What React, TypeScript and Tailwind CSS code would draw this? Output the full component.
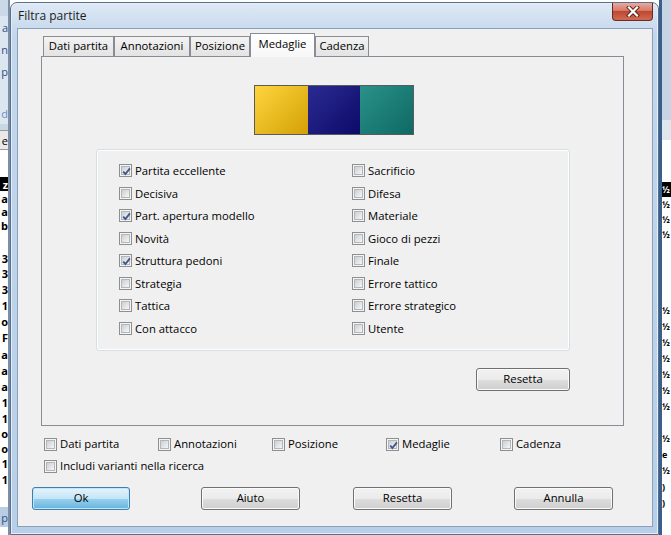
import type { ReactNode } from 'react';

const Check = ({ checked = false }: { checked?: boolean }) => (
  <span className="relative flex h-[13px] w-[13px] shrink-0 items-center justify-center border border-[#8e8f8f] bg-[#f4f4f4]">
    <span className="h-[9px] w-[9px] border border-[#b3b7bb] bg-[linear-gradient(135deg,#cbcfd4,#f6f6f6)]" />
    {checked && (
      <svg className="absolute left-[1px] top-[1px]" width="11" height="11" viewBox="0 0 11 11">
        <path d="M2.2 5.6 L4.4 8 L8.9 2.3" fill="none" stroke="#44598a" strokeWidth="1.9" />
      </svg>
    )}
  </span>
);

const CheckItem = ({ label, checked }: { label: string; checked?: boolean }) => (
  <div className="flex items-center gap-[3px] whitespace-nowrap">
    <Check checked={checked} />
    <span className="leading-none">{label}</span>
  </div>
);

const Btn = ({ children, className = '', focused = false }: { children: ReactNode; className?: string; focused?: boolean }) => (
  <div
    className={`flex h-[23px] shrink-0 items-center justify-center rounded-[3px] border ${
      focused
        ? 'border-[#3c7fb1] bg-[linear-gradient(to_bottom,#e5f4fc_0%,#c4e5f6_50%,#98d1ef_51%,#68b3db_100%)] shadow-[inset_0_0_0_1px_#bfe6fa]'
        : 'border-[#707070] bg-[linear-gradient(to_bottom,#f2f2f2_0%,#ebebeb_50%,#dddddd_51%,#cfcfcf_100%)] shadow-[inset_0_0_0_1px_#fbfbfb]'
    } ${className}`}
  >
    {children}
  </div>
);

// fragments of the window lying behind the dialog
const leftRows: [number, string, string][] = [
  [16, '', 'bg-[#cad8e8]'],
  [22, 'a', 'bg-[#dce6f1] text-[#2f4f80]'],
  [22, 'n', 'bg-[#dce6f1] text-[#2f4f80]'],
  [22, 'p', 'bg-[#dce6f1] text-[#2f4f80]'],
  [20, '', 'bg-[#dce6f1]'],
  [22, 'd', 'bg-[#dce6f1] text-[#6d8fbf]'],
  [6, '', 'bg-[#c9d6e4]'],
  [20, 'e', 'bg-[#e9e9e9] text-black border-y border-[#9a9a9a]'],
  [27, '', 'bg-white'],
  [14, 'z', 'bg-black text-white font-bold'],
  [14, 'a', 'bg-white font-bold'],
  [13, 'a', 'bg-white font-bold'],
  [14, 'b', 'bg-white font-bold'],
  [19, '', 'bg-white'],
  [15, '3', 'bg-white font-bold'],
  [15, '3', 'bg-white font-bold'],
  [16, '3', 'bg-white font-bold'],
  [16, '1', 'bg-white font-bold'],
  [16, 'o', 'bg-white font-bold'],
  [17, 'F', 'bg-white font-bold'],
  [16, 'a', 'bg-white font-bold'],
  [16, 'a', 'bg-white font-bold'],
  [16, 'a', 'bg-white font-bold'],
  [16, '1', 'bg-white font-bold'],
  [16, '1', 'bg-white font-bold'],
  [15, 'o', 'bg-white font-bold'],
  [15, 'o', 'bg-white font-bold'],
  [15, '1', 'bg-white font-bold'],
  [16, '1', 'bg-white font-bold'],
  [20, '', 'bg-white'],
  [20, 'p', 'bg-[#b9cde4] text-[#2f4f80]'],
];

const rightRows: [number, string, string][] = [
  [120, '', 'bg-[#c6d4e4]'],
  [20, '', 'bg-[#dfe6ee]'],
  [42, '', 'bg-white'],
  [15, '½', 'bg-black text-white'],
  [15, '½', 'bg-white'],
  [15, '½', 'bg-white'],
  [15, '½', 'bg-white'],
  [20, '', 'bg-white'],
  [22, '', 'bg-white'],
  [18, '', 'bg-white'],
  [16, '½', 'bg-white'],
  [16, '½', 'bg-white'],
  [16, '½', 'bg-white'],
  [16, '½', 'bg-white'],
  [16, '½', 'bg-white'],
  [16, '½', 'bg-white'],
  [16, '½', 'bg-white'],
  [16, '', 'bg-white'],
  [16, '½', 'bg-white'],
  [16, 'e', 'bg-white'],
  [16, '½', 'bg-white'],
  [16, ')', 'bg-white'],
  [16, ')', 'bg-white'],
  [40, '', 'bg-white'],
];

const leftCol = ['Partita eccellente', 'Decisiva', 'Part. apertura modello', 'Novità', 'Struttura pedoni', 'Strategia', 'Tattica', 'Con attacco'];
const leftChecked = [true, false, true, false, true, false, false, false];
const rightCol = ['Sacrificio', 'Difesa', 'Materiale', 'Gioco di pezzi', 'Finale', 'Errore tattico', 'Errore strategico', 'Utente'];

const tabs = [
  { label: 'Dati partita', w: 'w-[71px]' },
  { label: 'Annotazioni', w: 'w-[76px]' },
  { label: 'Posizione', w: 'w-[60px]' },
  { label: 'Medaglie', w: 'w-[65px]', active: true },
  { label: 'Cadenza', w: 'w-[54px]' },
];

export default function App() {
  return (
    <div className="flex h-[535px] w-[671px] overflow-hidden bg-white font-['Open_Sans',sans-serif] text-[11.3px] text-black">
      {/* window behind, left edge */}
      <div className="flex w-[10px] shrink-0 flex-col overflow-hidden border-r-2 border-[#7d8fa6]">
        {leftRows.map(([h, t, c], i) => (
          <div key={i} style={{ height: h }} className={`flex shrink-0 items-center justify-end whitespace-nowrap text-[11px] leading-none ${c}`}>
            {t}
          </div>
        ))}
      </div>

      {/* dialog */}
      <div className="mt-[2px] flex w-[649px] shrink-0 flex-col rounded-t-[7px] border border-[#56708f] bg-[linear-gradient(to_bottom,#dfe9f4_0%,#c3d7ec_6%,#b7cfe8_100%)] pb-[7px] pl-[6px] pr-[5px] shadow-[inset_0_0_0_1px_#e6eff8]">
        <div className="flex h-[25px] items-start justify-between">
          <span className="pl-[1px] pt-[4px] text-[12px] text-[#1b1b1b]">Filtra partite</span>
          <div className="flex h-[18px] w-[41px] items-center justify-center rounded-b-[4px] border border-t-0 border-[#6b2a23] bg-[linear-gradient(to_bottom,#e8aa9e_0%,#d47a68_45%,#c0472f_50%,#cf6b52_100%)]">
            <svg width="14" height="11" viewBox="0 0 14 11">
              <path d="M3 1.5 L11 9.5 M11 1.5 L3 9.5" stroke="#5a2018" strokeWidth="4" strokeLinecap="square" />
              <path d="M3 1.5 L11 9.5 M11 1.5 L3 9.5" stroke="#ffffff" strokeWidth="2.2" strokeLinecap="square" />
            </svg>
          </div>
        </div>

        <div className="flex flex-1 flex-col border border-[#8ba1bb] bg-[#f0f0f0]">
          {/* tabs */}
          <div className="ml-[24px] mt-[4px] flex items-end pl-[1px]">
            {tabs.map((t) =>
              t.active ? (
                <div key={t.label} className={`relative z-10 -mb-px flex h-[24px] items-start justify-center border border-b-0 border-[#898c95] bg-[linear-gradient(to_bottom,#ffffff,#f7f7f7)] pt-[2px] ${t.w}`}>
                  {t.label}
                </div>
              ) : (
                <div key={t.label} className={`flex h-[20px] items-center justify-center border border-b-0 border-[#898c95] bg-[linear-gradient(to_bottom,#f3f3f3,#e3e3e3)] ${t.w}`}>
                  {t.label}
                </div>
              ),
            )}
          </div>

          {/* panel */}
          <div className="ml-[23px] mr-[28px] flex h-[370px] flex-col border border-[#898c95] bg-[#f0f0f0]">
            <div className="ml-[212px] mt-[28px] flex h-[50px] w-[160px] border border-[#5b5b5b]">
              <div className="flex-1 bg-[linear-gradient(135deg,#fed53d,#d4a006)]" />
              <div className="flex-1 bg-[linear-gradient(135deg,#2b2a92,#0c0b69)]" />
              <div className="flex-1 bg-[linear-gradient(135deg,#2a9189,#0e6964)]" />
            </div>

            <div className="ml-[54px] mt-[14px] flex w-[474px] flex-col">
              <div className="h-[202px] rounded-[3px] border border-[#d5dfe5] pl-[22px] pt-[9.5px] shadow-[inset_0_0_0_1px_#ffffff]">
                <div className="grid grid-cols-[233px_1fr]">
                  <div className="flex flex-col">
                    {leftCol.map((l, i) => (
                      <div key={l} className="flex h-[22.5px] items-center">
                        <CheckItem label={l} checked={leftChecked[i]} />
                      </div>
                    ))}
                  </div>
                  <div className="flex flex-col">
                    {rightCol.map((l) => (
                      <div key={l} className="flex h-[22.5px] items-center">
                        <CheckItem label={l} />
                      </div>
                    ))}
                  </div>
                </div>
              </div>
              <Btn className="mt-[17px] w-[94px] self-end">Resetta</Btn>
            </div>
          </div>

          {/* include options */}
          <div className="ml-[26px] mt-[7px] flex flex-col">
            <div className="grid h-[22px] grid-cols-[114px_114px_114px_114px_114px] items-center">
              <CheckItem label="Dati partita" />
              <CheckItem label="Annotazioni" />
              <CheckItem label="Posizione" />
              <CheckItem label="Medaglie" checked />
              <CheckItem label="Cadenza" />
            </div>
            <div className="flex h-[22px] items-center">
              <CheckItem label="Includi varianti nella ricerca" />
            </div>
          </div>

          {/* buttons */}
          <div className="ml-[14px] mt-[10px] flex">
            <Btn focused className="w-[98px]">Ok</Btn>
            <Btn className="ml-[71px] w-[99px]">Aiuto</Btn>
            <Btn className="ml-[53px] w-[99px]">Resetta</Btn>
            <Btn className="ml-[62px] w-[99px]">Annulla</Btn>
          </div>
        </div>
      </div>

      {/* window behind, right edge */}
      <div className="flex flex-1 flex-col overflow-hidden border-l-[3px] border-[#3b5f8c]">
        {rightRows.map(([h, t, c], i) => (
          <div key={i} style={{ height: h }} className={`flex shrink-0 items-center whitespace-nowrap text-[9px] font-bold leading-none ${c}`}>
            {t}
          </div>
        ))}
      </div>
    </div>
  );
}
